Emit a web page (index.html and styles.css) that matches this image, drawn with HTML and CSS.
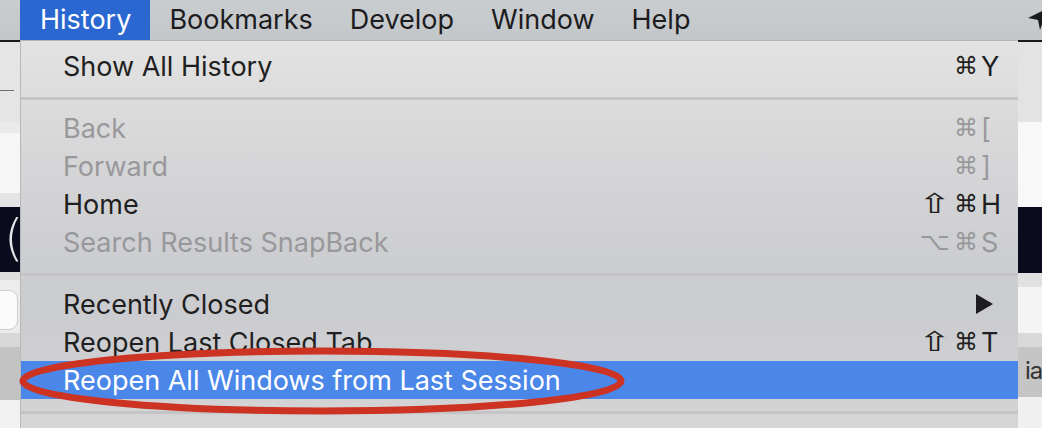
FILE: index.html
```html
<!DOCTYPE html>
<html lang="en">
<head>
<meta charset="utf-8">
<title>Safari History menu</title>
<link rel="stylesheet" href="styles.css">
</head>
<body>
<div class="screen">
  <div class="menubar">
    <div class="bar-gap"></div>
    <div class="mitem active">History</div>
    <div class="mitem">Bookmarks</div>
    <div class="mitem">Develop</div>
    <div class="mitem">Window</div>
    <div class="mitem">Help</div>
    <svg class="loc" width="20" height="30" viewBox="0 0 20 30" aria-hidden="true">
      <polygon points="0,18 20,8 12,30 10,20" fill="#1c1c1e"/>
    </svg>
  </div>
  <div class="stage">
    <div class="strip left">
      <div class="b dark" style="height:2px"></div>
      <div class="b" style="height:48px;background:#e5e5e5"></div>
      <div class="b tick" style="height:1px"></div>
      <div class="b" style="height:31px;background:#e5e5e5"></div>
      <div class="b" style="height:11px;background:#eaeaea"></div>
      <div class="b" style="height:60px;background:#f6f6f6"></div>
      <div class="b" style="height:14px;background:#e4e4e4"></div>
      <div class="b navy paren" style="height:65px">(</div>
      <div class="b" style="height:8px;background:#dddddd"></div>
      <div class="b boxrow" style="height:53px"><div class="pill"></div></div>
      <div class="b" style="height:14px;background:#d8d8d8"></div>
      <div class="b" style="height:53px;background:#c3c3c3"></div>
      <div class="b" style="height:40px;background:#f1f1f1"></div>
    </div>
    <div class="menu">
      <div class="row"><span class="label">Show All History</span><span class="sc"><span class="mods"><span class="cmd">⌘</span></span><span class="key">Y</span></span></div>
      <div class="sep"></div>
      <div class="row off"><span class="label">Back</span><span class="sc"><span class="mods"><span class="cmd">⌘</span></span><span class="key">[</span></span></div>
      <div class="row off"><span class="label">Forward</span><span class="sc"><span class="mods"><span class="cmd">⌘</span></span><span class="key">]</span></span></div>
      <div class="row"><span class="label">Home</span><span class="sc"><span class="mods"><span class="shift">⇧</span><span class="cmd">⌘</span></span><span class="key">H</span></span></div>
      <div class="row off"><span class="label">Search Results SnapBack</span><span class="sc"><span class="mods"><span class="opt">⌥</span><span class="cmd">⌘</span></span><span class="key">S</span></span></div>
      <div class="sep"></div>
      <div class="row"><span class="label">Recently Closed</span><span class="submenu"></span></div>
      <div class="row"><span class="label">Reopen Last Closed Tab</span><span class="sc"><span class="mods"><span class="shift">⇧</span><span class="cmd">⌘</span></span><span class="key">T</span></span></div>
      <div class="row hl"><span class="label">Reopen All Windows from Last Session</span></div>
      <div class="sep"></div>
      <div class="row"></div>
    </div>
    <div class="strip right">
      <div class="b dark" style="height:2px"></div>
      <div class="b" style="height:80px;background:#e3e3e3"></div>
      <div class="b" style="height:85px;background:#f8f8f8"></div>
      <div class="b navy" style="height:66px"></div>
      <div class="b" style="height:14px;background:#e1e1e1"></div>
      <div class="b" style="height:46px;background:#f4f4f4"></div>
      <div class="b" style="height:14px;background:#d9d9d9"></div>
      <div class="b tabtext" style="height:50px">ia</div>
      <div class="b" style="height:40px;background:#f0f0f0"></div>
    </div>
    <svg class="annot" width="1042" height="388" viewBox="0 0 1042 388" aria-hidden="true">
      <ellipse cx="322" cy="341" rx="299" ry="30" fill="none" stroke="#cc3322" stroke-width="7"/>
    </svg>
  </div>
</div>
</body>
</html>
```

FILE: styles.css
```css
* { box-sizing: border-box; margin: 0; padding: 0; }

html, body {
  width: 1042px;
  height: 428px;
  overflow: hidden;
  background: #e5e5e5;
}

body {
  font-family: Inter, "Noto Sans", "DejaVu Sans", sans-serif;
  font-size: 27px;
  color: #1f1f21;
}

.screen {
  width: 1042px;
  height: 428px;
  overflow: hidden;
  display: flex;
  flex-direction: column;
}

/* ---------- menu bar ---------- */
.menubar {
  height: 40px;
  flex: none;
  display: flex;
  align-items: stretch;
  background: linear-gradient(#cacdd0, #c4c7ca);
  overflow: hidden;
}

.bar-gap { width: 20px; flex: none; }

.mitem {
  display: flex;
  align-items: center;
  padding: 0 18px 2px 19px;
  color: #1c1c1e;
  line-height: 1;
}

.mitem.active {
  background: #2b67d0;
  color: #ffffff;
  padding: 0 19px 2px 20px;
}

.loc {
  margin-left: auto;
  margin-right: -6px;
  flex: none;
}

/* ---------- stage ---------- */
.stage {
  position: relative;
  flex: 1;
  display: flex;
}

.strip {
  display: flex;
  flex-direction: column;
  flex: none;
}

.strip.left { width: 20px; background: #e5e5e5; }
.strip.right { width: 24px; background: #e3e3e3; }

.b { flex: none; width: 100%; }
.dark { background: #1a1a1a; }
.navy { background: #0b0b1e; }
.tick { width: 14px; background: #707070; }

.paren {
  color: #e6e6ea;
  font-family: "DejaVu Sans", sans-serif;
  font-weight: 200;
  font-size: 50px;
  line-height: 62px;
  padding-left: 4px;
}

.boxrow {
  background: #ececec;
  padding-top: 10px;
}

.pill {
  width: 38px;
  height: 40px;
  margin-left: -20px;
  background: #fbfbfb;
  border: 1px solid #cdcdcd;
  border-radius: 9px;
}

.tabtext {
  background: #c5c5c5;
  color: #333333;
  font-size: 24px;
  letter-spacing: -1px;
  padding-left: 7px;
  line-height: 48px;
  overflow: hidden;
  white-space: nowrap;
}

/* ---------- dropdown menu ---------- */
.menu {
  width: 998px;
  flex: none;
  border-top: 1px solid #b4b4b6;
  border-left: 1px solid #b8b8ba;
  padding-top: 6px;
  background: linear-gradient(#e3e3e3 0%, #dadadb 18%, #cdced1 50%, #cbccd0 65%, #d2d2d4 85%, #dbdbdb 100%);
  display: flex;
  flex-direction: column;
}

.row {
  height: 38px;
  flex: none;
  display: flex;
  align-items: center;
  padding: 0 17px 0 42px;
  line-height: 1;
  white-space: nowrap;
}

.row .label { flex: 1; }

.row.off { color: #98989b; }

.row.hl {
  background: #4a87e9;
  color: #ffffff;
}

.sc {
  display: flex;
  align-items: center;
}

.mods {
  display: flex;
  align-items: center;
  justify-content: flex-end;
  font-family: "DejaVu Sans", sans-serif;
}

.cmd {
  font-size: 24px;
  margin-left: 5px;
  margin-right: 3px;
}

.shift {
  display: inline-block;
  font-size: 26px;
  transform: scale(1.55, 1.05);
  margin-right: 3px;
}

.opt {
  display: inline-block;
  font-size: 24px;
  transform: scaleX(1.1);
}

.key {
  width: 20px;
}

.submenu {
  width: 0;
  height: 0;
  border-top: 10px solid transparent;
  border-bottom: 10px solid transparent;
  border-left: 17px solid #1c1c1e;
  margin-right: 8px;
}

.sep {
  height: 24px;
  flex: none;
  padding-top: 12px;
}

.sep::before {
  content: "";
  display: block;
  height: 3px;
  background: #c5c5c7;
}

/* ---------- annotation ---------- */
.annot {
  position: absolute;
  left: 0;
  top: 0;
  pointer-events: none;
}
```
